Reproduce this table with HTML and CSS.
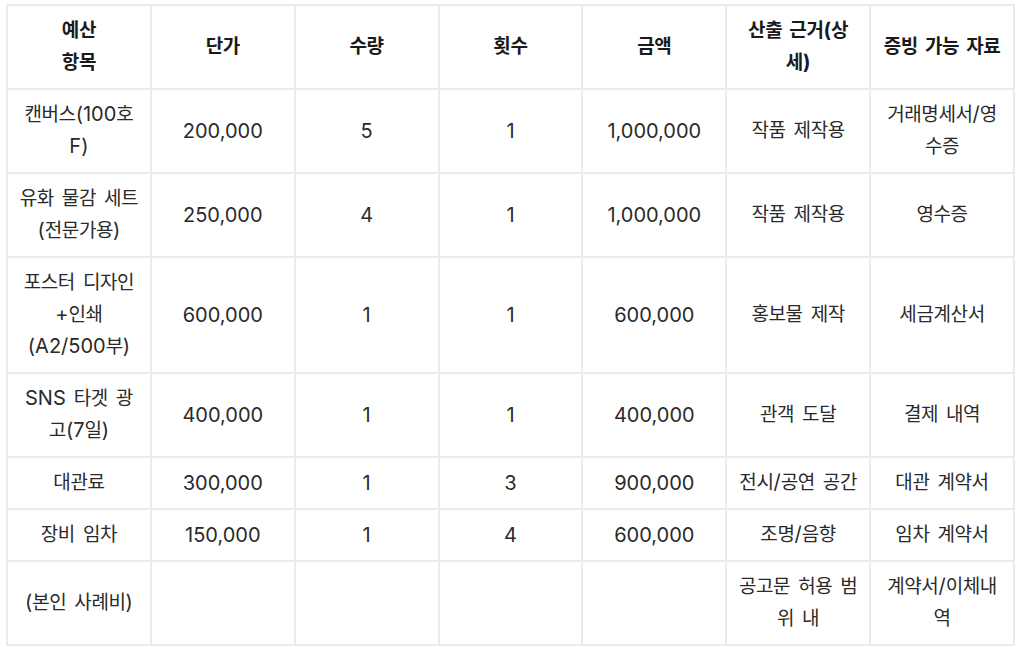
FILE: index.html
```html
<!DOCTYPE html>
<html lang="ko">
<head>
<meta charset="utf-8">
<link rel="stylesheet" href="styles.css">
</head>
<body>
<div class="wrap">
<table class="budget">
  <thead>
    <tr>
      <th>예산<br>항목</th>
      <th>단가</th>
      <th>수량</th>
      <th>횟수</th>
      <th>금액</th>
      <th>산출 근거<span class="l">(</span>상세<span class="l">)</span></th>
      <th>증빙 가능 자료</th>
    </tr>
  </thead>
  <tbody>
    <tr><td>캔버스<span class="l">(100</span>호<span class="l">F)</span></td><td class="l">200,000</td><td class="l">5</td><td class="l">1</td><td class="l">1,000,000</td><td>작품 제작용</td><td>거래명세서<span class="l">/</span>영수증</td></tr>
    <tr><td>유화 물감 세트<span class="l">(</span>전문가용<span class="l">)</span></td><td class="l">250,000</td><td class="l">4</td><td class="l">1</td><td class="l">1,000,000</td><td>작품 제작용</td><td>영수증</td></tr>
    <tr><td>포스터 디자인<span class="l">+</span>인쇄<span class="l">(A2/500</span>부<span class="l">)</span></td><td class="l">600,000</td><td class="l">1</td><td class="l">1</td><td class="l">600,000</td><td>홍보물 제작</td><td>세금계산서</td></tr>
    <tr><td><span class="l">SNS</span> 타겟 광고<span class="l">(7</span>일<span class="l">)</span></td><td class="l">400,000</td><td class="l">1</td><td class="l">1</td><td class="l">400,000</td><td>관객 도달</td><td>결제 내역</td></tr>
    <tr><td>대관료</td><td class="l">300,000</td><td class="l">1</td><td class="l">3</td><td class="l">900,000</td><td>전시<span class="l">/</span>공연 공간</td><td>대관 계약서</td></tr>
    <tr><td>장비 임차</td><td class="l">150,000</td><td class="l">1</td><td class="l">4</td><td class="l">600,000</td><td>조명<span class="l">/</span>음향</td><td>임차 계약서</td></tr>
    <tr><td><span class="l">(</span>본인 사례비<span class="l">)</span></td><td></td><td></td><td></td><td></td><td>공고문 허용 범위 내</td><td>계약서<span class="l">/</span>이체내역</td></tr>
  </tbody>
</table>
</div>
</body>
</html>
```
FILE: styles.css
```css
html, body {
  margin: 0;
  padding: 0;
  background: #ffffff;
}
.wrap {
  padding: 4px 0 0 6px;
}
.budget {
  width: 1009px;
  border-collapse: collapse;
  table-layout: fixed;
  font-family: Inter, "Noto Sans CJK KR", sans-serif;
  font-size: 19px;
  letter-spacing: -0.4px;
  word-spacing: 3px;
  line-height: 32px;
  color: #2a2a2a;
}
.budget th,
.budget td {
  border: 2px solid #ebebeb;
  padding: 9px 10.5px;
  text-align: center;
  vertical-align: middle;
}
.budget th {
  font-weight: 700;
  color: #1a1a1a;
}
.l {
  font-size: 20px;
  letter-spacing: 0;
  word-spacing: 0;
}
span.l {
  line-height: 20px;
}
```
